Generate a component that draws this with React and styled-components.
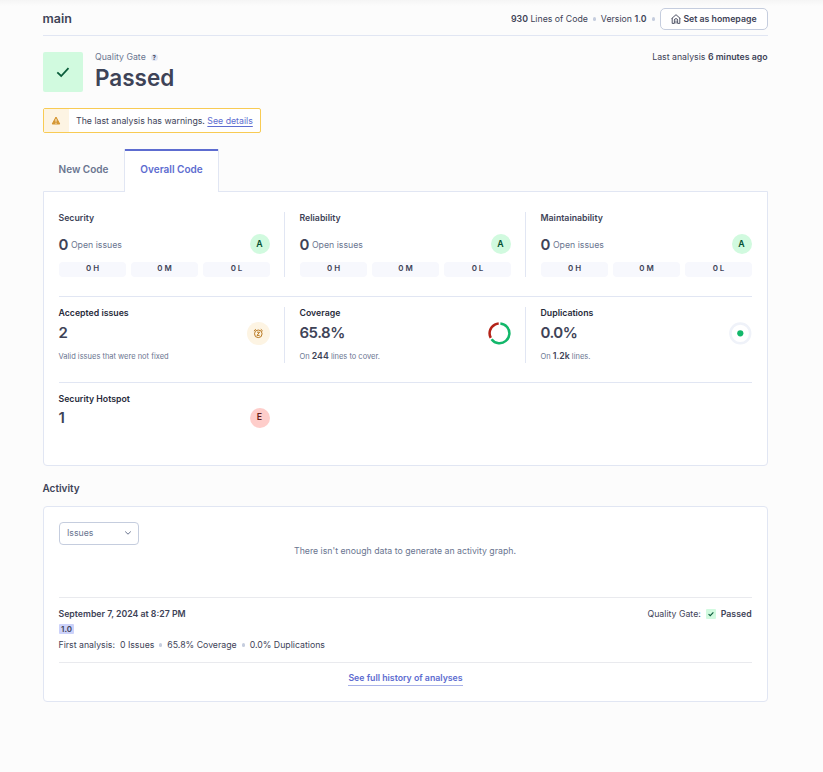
import React from "react";
import styled, { createGlobalStyle } from "styled-components";

const c = {
  ink: "#3e4357",
  dark: "#282b3b",
  muted: "#6a7590",
  line: "#e1e6f3",
  control: "#c5cdde",
  link: "#5d6cd0",
};

const GlobalStyle = createGlobalStyle`
  * { box-sizing: border-box; }
  body {
    margin: 0;
    background: #fcfcfd;
    font-family: Inter, "Liberation Sans", sans-serif;
    font-size: 8.75px;
    line-height: 14px;
    color: ${c.ink};
  }
`;

const Page = styled.main`
  height: 772px;
  padding: 0 55px 0 43px;
  background: linear-gradient(#f5f5f5, #fcfcfc 6px);
  overflow: hidden;
`;

const Header = styled.header`
  display: flex;
  align-items: center;
  height: 36px;
  padding-top: 2px;
  border-bottom: 1px solid ${c.line};
`;

const Branch = styled.h1`
  flex: 1;
  margin: 0 0 0 -0.5px;
  font-size: 12.5px;
  font-weight: 600;
  line-height: 19px;
  padding-bottom: 1px;
`;

const Strong = styled.b`
  font-weight: 600;
  color: ${c.ink};
`;

const Dot = styled.i`
  width: 3px;
  height: 4px;
  border-radius: 2px;
  background: ${c.control};
  margin: 0 ${(p) => p.$gap || "5px"};
`;

const HomeButton = styled.button`
  display: flex;
  align-items: center;
  justify-content: center;
  gap: 2px;
  width: 108px;
  height: 22px;
  margin-left: 0.5px;
  padding: 0;
  border: 1px solid ${c.control};
  border-radius: 5px;
  background: #fff;
  color: ${c.ink};
  font: 600 8.75px/14px Inter, sans-serif;
`;

const Gate = styled.section`
  display: flex;
  height: 40px;
  margin-top: 16px;
`;

const GateIcon = styled.div`
  display: grid;
  place-items: center;
  width: ${(p) => p.$size}px;
  height: ${(p) => p.$size}px;
  border-radius: ${(p) => (p.$size > 20 ? 2 : 1)}px;
  background: #d1fadf;
`;

const GateText = styled.div`
  flex: 1;
  margin-left: 12px;
`;

const GateLabel = styled.div`
  display: flex;
  align-items: center;
  gap: 5px;
  height: 10px;
  color: ${c.muted};
`;

const Help = styled.span`
  display: grid;
  place-items: center;
  width: 7px;
  height: 7px;
  border-radius: 50%;
  background: #e1e6f3;
  color: ${c.ink};
  font-size: 6px;
  font-weight: 700;
  line-height: 7px;
`;

const GateStatus = styled.div`
  font-size: 22.5px;
  font-weight: 600;
  line-height: 32px;
`;

const LastAnalysis = styled.div`
  margin-right: 0.4px;
  line-height: 10px;
`;

const Warning = styled.div`
  display: flex;
  align-items: center;
  width: 218px;
  height: 25px;
  margin-top: 16px;
  border: 1px solid #f8cb54;
  border-radius: 2px;
  background: #fff;
  white-space: nowrap;
`;

const WarningIcon = styled.div`
  display: grid;
  flex: none;
  place-items: center;
  width: 25px;
  height: 23px;
  margin-right: 7px;
  padding-right: 1px;
  background: #fdf4e3;
`;

const InlineLink = styled.a`
  color: ${c.link};
  text-decoration: underline;
  text-underline-offset: 1.5px;
`;

const Tabs = styled.nav`
  display: flex;
  height: 42px;
  margin-top: 16px;
`;

const Tab = styled.div`
  display: grid;
  place-items: center;
  width: ${(p) => (p.$active ? 95 : 81)}px;
  height: ${(p) => (p.$active ? 43 : 42)}px;
  padding-bottom: ${(p) => (p.$active ? 3 : 2)}px;
  font-size: 10px;
  font-weight: 600;
  color: ${(p) => (p.$active ? c.link : c.muted)};
  background: ${(p) => (p.$active ? "#fff" : "transparent")};
  border: solid ${(p) => (p.$active ? c.line : "transparent")};
  border-width: 0 1px;
  box-shadow: ${(p) => (p.$active ? `inset 0 2px ${c.link}` : "none")};
  z-index: 1;
`;

const Panel = styled.section`
  height: ${(p) => p.$height}px;
  padding: 0 15px;
  border: 1px solid ${c.line};
  border-radius: ${(p) => (p.$tabbed ? "0 0 4px 4px" : "4px")};
  background: #fff;
`;

const MeasureRow = styled.div`
  display: grid;
  grid-template-columns: repeat(3, 211px);
  column-gap: 30px;
  height: ${(p) => p.$height}px;
  padding-top: ${(p) => p.$top}px;
  border-bottom: ${(p) => (p.$last ? "none" : `1px solid ${c.line}`)};
`;

const Measure = styled.div`
  height: ${(p) => p.$height}px;
  width: ${(p) => (p.$divided ? 226 : 211)}px;
  padding-right: ${(p) => (p.$divided ? 14 : 0)}px;
  border-right: ${(p) => (p.$divided ? `1px solid ${c.line}` : "none")};
`;

const MeasureTitle = styled.div`
  height: 12px;
  margin-left: -0.5px;
  line-height: 12px;
  font-weight: 600;
  color: ${(p) => (p.$dark ? c.dark : c.ink)};
`;

const ValueRow = styled.div`
  display: flex;
  align-items: center;
  justify-content: space-between;
  height: ${(p) => p.$height || 20}px;
  margin-top: ${(p) => p.$top || 0}px;
`;

const Value = styled.span`
  margin-left: -0.5px;
  font-size: 15px;
  font-weight: 600;
  letter-spacing: -0.5px;
  line-height: 20px;
  padding-bottom: 1px;
`;

const OpenIssues = styled.span`
  display: flex;
  align-items: center;
  gap: 3px;
  color: ${c.muted};
  padding-top: 2px;
  ${Value} { color: ${c.ink}; }
`;

const Rating = styled.span`
  display: grid;
  place-items: center;
  width: 20px;
  height: 20px;
  border-radius: 50%;
  font-weight: 600;
  padding-bottom: ${(p) => (p.$bad ? 2 : 0)}px;
  padding-right: 1px;
  background: ${(p) => (p.$bad ? "#fecdca" : "#d1fadf")};
  color: ${(p) => (p.$bad ? "#651e19" : "#054f31")};
`;

const Severities = styled.div`
  display: grid;
  grid-template-columns: repeat(3, 67px);
  gap: 5px;
  margin-top: 8px;
`;

const Severity = styled.div`
  height: 15px;
  border-radius: 4px;
  background: #f7f8fd;
  text-align: center;
  font-size: 7.9px;
  font-weight: 600;
  line-height: 13px;
`;

const Note = styled.div`
  height: 12px;
  margin: ${(p) => p.$top || 5}px 0 0 -0.5px;
  font-size: 7.5px;
  line-height: 12px;
  color: ${c.muted};
  ${Strong} { font-size: 8.75px; }
`;

const SectionTitle = styled.h2`
  margin: 15px 0 11px -0.5px;
  font-size: 10px;
  font-weight: 600;
  line-height: 14px;
`;

const Select = styled.div`
  display: flex;
  align-items: center;
  justify-content: space-between;
  width: 80px;
  height: 23px;
  margin-top: 15px;
  padding: 0 6px 1px 7px;
  border: 1px solid ${c.control};
  border-radius: 4px;
  color: ${c.muted};
`;

const Empty = styled.p`
  margin: -1px 0 0 -1px;
  text-align: center;
  color: ${c.muted};
  height: 53px;
`;

const Analysis = styled.div`
  display: flex;
  justify-content: space-between;
  height: 66px;
  padding-top: 9px;
  border: solid #e9eaee;
  border-width: 1px 0;
`;

const Version = styled.div`
  width: 15px;
  height: 10px;
  margin: 3px 0 4px;
  border-radius: 1px;
  background: #ccd2fa;
  text-align: center;
  font-size: 7.9px;
  font-weight: 600;
  line-height: 10px;
`;

const Inline = styled.div`
  display: flex;
  align-items: center;
  height: 14px;
  margin-left: -0.5px;
  white-space: pre;
`;

const GateResult = styled(Inline)`
  gap: 5px;
  margin-right: 0.4px;
`;

const History = styled.div`
  display: flex;
  justify-content: center;
  padding-top: 9px;
`;

const HistoryLink = styled.a`
  height: 14px;
  line-height: 13px;
  color: ${c.link};
  font-weight: 600;
  border-bottom: 1px solid #a9b2e8;
`;

const Check = ({ size, width }) => (
  <svg width={size} height={size} viewBox="0 0 14 14" fill="none" stroke="#0b5c3b" strokeWidth={width}>
    <path d="M1.300 7.400 5.200 11 12.500 3.200" />
  </svg>
);

const HomeIcon = () => (
  <svg width="10" height="10" viewBox="0 0 10 10" fill="none" stroke={c.ink} strokeWidth=".9">
    <path d="M.6 4.600 5 .7l4.400 3.900M1.200 4v5.400h2.200V6.200a1.600 1.600 0 0 1 3.200 0v3.200h2.200V4M5 6.500v3" />
  </svg>
);

const AlertIcon = () => (
  <svg width="10" height="9" viewBox="0 0 10 9">
    <path d="M5 1 8.800 8H1.200Z" fill="#d69733" stroke="#d69733" strokeLinejoin="round" />
    <path d="M5 3v2.700M5 6.700v1.100" stroke="#fdf4e3" />
  </svg>
);

const SnoozeIcon = () => (
  <svg width="23" height="23" viewBox="0 0 23 23" fill="none" stroke="#b97a24" strokeWidth="1">
    <circle cx="11.500" cy="11.500" r="11.500" fill="#fdf4e3" stroke="none" />
    <circle cx="11.300" cy="11.800" r="3.800" />
    <path d="M6.900 9 8.800 7.200M15.700 9 13.800 7.200M10 10.200h2.600l-2.600 3.200h2.600" />
  </svg>
);

const CoverageRing = () => (
  <svg width="23" height="23" viewBox="0 0 23 23" fill="none" strokeWidth="2.500">
    <circle cx="11.500" cy="11.300" r="9.900" stroke="#12b76a" pathLength="100" strokeDasharray="63.500 36.500" transform="rotate(-85 11.500 11.300)" />
    <circle cx="11.500" cy="11.300" r="9.900" stroke="#b42318" pathLength="100" strokeDasharray="31.500 68.500" transform="rotate(152 11.500 11.300)" />
  </svg>
);

const DuplicationRing = () => (
  <svg width="23" height="23" viewBox="0 0 23 23">
    <circle cx="11.300" cy="11.300" r="9.900" fill="none" stroke="#eff2f9" strokeWidth="2.500" />
    <circle cx="11.300" cy="11.300" r="3.100" fill="#12b76a" />
  </svg>
);

const Chevron = () => (
  <svg width="8" height="8" viewBox="0 0 8 8" fill="none" stroke={c.muted}>
    <path d="m1.200 2.500 2.800 2.700 2.800-2.700" />
  </svg>
);

const qualities = ["Security", "Reliability", "Maintainability"];

export default function App() {
  return (
    <>
      <GlobalStyle />
      <Page>
        <Header>
          <Branch>main</Branch>
          <Inline><Strong>930</Strong> Lines of Code<Dot />Version <Strong>1.0</Strong><Dot /></Inline>
          <HomeButton><HomeIcon />Set as homepage</HomeButton>
        </Header>

        <Gate>
          <GateIcon $size={40}><Check size={14} width={1.8} /></GateIcon>
          <GateText>
            <GateLabel>Quality Gate <Help>?</Help></GateLabel>
            <GateStatus>Passed</GateStatus>
          </GateText>
          <LastAnalysis>Last analysis <Strong>6 minutes ago</Strong></LastAnalysis>
        </Gate>

        <Warning>
          <WarningIcon><AlertIcon /></WarningIcon>
          <span>The last analysis has warnings. <InlineLink>See details</InlineLink></span>
        </Warning>

        <Tabs>
          <Tab>New Code</Tab>
          <Tab $active>Overall Code</Tab>
        </Tabs>

        <Panel $height={275} $tabbed>
          <MeasureRow $height={105} $top={20}>
            {qualities.map((name, i) => (
              <Measure key={name} $height={65} $divided={i < 2}>
                <MeasureTitle>{name}</MeasureTitle>
                <ValueRow $top={10}>
                  <OpenIssues><Value>0</Value>Open issues</OpenIssues>
                  <Rating>A</Rating>
                </ValueRow>
                <Severities>
                  {["H", "M", "L"].map((s) => <Severity key={s}>0 {s}</Severity>)}
                </Severities>
              </Measure>
            ))}
          </MeasureRow>
          <MeasureRow $height={86} $top={10}>
            <Measure $height={56} $divided>
              <MeasureTitle $dark>Accepted issues</MeasureTitle>
              <ValueRow $top={3} $height={23}><Value>2</Value><SnoozeIcon /></ValueRow>
              <Note $top={6}>Valid issues that were not fixed</Note>
            </Measure>
            <Measure $height={56} $divided>
              <MeasureTitle $dark>Coverage</MeasureTitle>
              <ValueRow $top={3} $height={23}><Value>65.8%</Value><CoverageRing /></ValueRow>
              <Note>On <Strong>244</Strong> lines to cover.</Note>
            </Measure>
            <Measure $height={56}>
              <MeasureTitle $dark>Duplications</MeasureTitle>
              <ValueRow $top={3} $height={23}><Value>0.0%</Value><DuplicationRing /></ValueRow>
              <Note>On <Strong>1.2k</Strong> lines.</Note>
            </Measure>
          </MeasureRow>
          <MeasureRow $height={80} $top={10} $last>
            <Measure $height={56}>
              <MeasureTitle $dark>Security Hotspot</MeasureTitle>
              <ValueRow $top={3}><Value>1</Value><Rating $bad>E</Rating></ValueRow>
            </Measure>
          </MeasureRow>
        </Panel>

        <SectionTitle>Activity</SectionTitle>
        <Panel $height={196}>
          <Select>Issues<Chevron /></Select>
          <Empty>There isn't enough data to generate an activity graph.</Empty>
          <Analysis>
            <div>
              <Inline><Strong>September 7, 2024 at 8:27 PM</Strong></Inline>
              <Version>1.0</Version>
              <Inline>First analysis:  0 Issues<Dot $gap="5px" />65.8% Coverage<Dot $gap="5px" />0.0% Duplications</Inline>
            </div>
            <GateResult>Quality Gate:<GateIcon $size={10}><Check size={6} width={2.600} /></GateIcon><Strong>Passed</Strong></GateResult>
          </Analysis>
          <History><HistoryLink>See full history of analyses</HistoryLink></History>
        </Panel>
      </Page>
    </>
  );
}
